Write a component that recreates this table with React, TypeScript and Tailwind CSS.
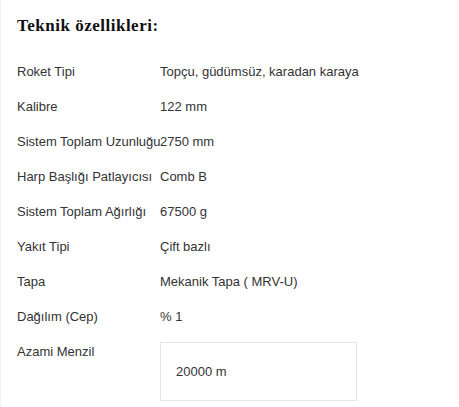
import React from "react";

const rows: [string, string][] = [
  ["Roket Tipi", "Topçu, güdümsüz, karadan karaya"],
  ["Kalibre", "122 mm"],
  ["Sistem Toplam Uzunluğu", "2750 mm"],
  ["Harp Başlığı Patlayıcısı", "Comb B"],
  ["Sistem Toplam Ağırlığı", "67500 g"],
  ["Yakıt Tipi", "Çift bazlı"],
  ["Tapa", "Mekanik Tapa ( MRV-U)"],
  ["Dağılım (Cep)", "% 1"],
];

export default function App() {
  return (
    <div className="w-[459px] h-[407px] overflow-hidden bg-white border-l border-[#f2f2f2]">
      <div className="pl-[16px] pt-[16px]">
        <h2
          className="text-[17px] leading-[20px] font-bold text-[#111] tracking-[0.5px]"
          style={{ fontFamily: '"Liberation Serif", "Times New Roman", serif' }}
        >
          Teknik özellikleri:
        </h2>
        <div
          className="mt-[18px] text-[13px] leading-[19px] text-[#333]"
          style={{ fontFamily: '"Liberation Sans", Arial, sans-serif' }}
        >
          {rows.map(([k, v]) => (
            <div key={k} className="flex py-[8px]">
              <div className="w-[143px] shrink-0 whitespace-nowrap">{k}</div>
              <div>{v}</div>
            </div>
          ))}
          <div className="flex pt-[8px]">
            <div className="w-[143px] shrink-0">Azami Menzil</div>
            <div className="w-[197px] border border-[#e6e6e6] px-[15px] py-[19px]">20000 m</div>
          </div>
        </div>
      </div>
    </div>
  );
}
